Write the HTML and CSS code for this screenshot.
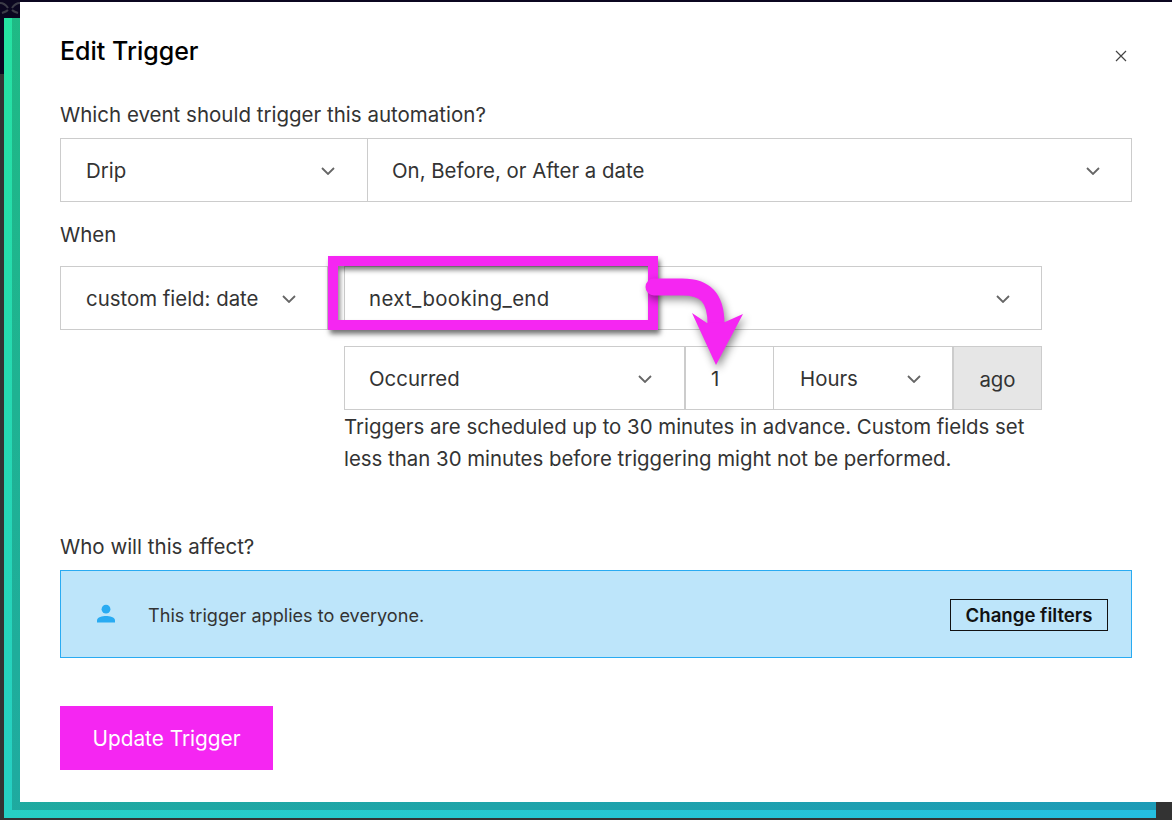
FILE: index.html
```html
<!DOCTYPE html>
<html lang="en">
<head>
<meta charset="utf-8">
<title>Edit Trigger</title>
<link rel="stylesheet" href="styles.css">
</head>
<body>
<div class="desktop">
  <div class="topbar">
    <svg class="swirl" width="20" height="16" viewBox="0 0 20 16"><path d="M0 3c4 0 6 2 8 5M20 3c-4 0-6 2-8 5M2 13c3-1 5-2 6-3M18 13c-3-1-5-2-6-3" fill="none" stroke="#3c3c48" stroke-width="2"/></svg>
  </div>
  <div class="frame"><div class="frame-inner"></div></div>
  <main class="modal">
    <header class="modal-head">
      <h1 class="title">Edit Trigger</h1>
      <svg class="close" width="12" height="12" viewBox="0 0 12 12"><path d="M1 1l10 10M11 1L1 11" fill="none" stroke="#444" stroke-width="1.2"/></svg>
    </header>
    <p class="label label-first">Which event should trigger this automation?</p>
    <div class="row row-event">
      <div class="field sel-drip"><span>Drip</span><svg class="chev" width="14" height="8" viewBox="0 0 14 8"><path d="M1 1l6 6 6-6" fill="none" stroke="#666" stroke-width="1.8"/></svg></div>
      <div class="field sel-date"><span>On, Before, or After a date</span><svg class="chev" width="14" height="8" viewBox="0 0 14 8"><path d="M1 1l6 6 6-6" fill="none" stroke="#666" stroke-width="1.8"/></svg></div>
    </div>
    <p class="label label-when">When</p>
    <div class="row row-when">
      <div class="field sel-kind"><span>custom field: date</span><svg class="chev" width="14" height="8" viewBox="0 0 14 8"><path d="M1 1l6 6 6-6" fill="none" stroke="#666" stroke-width="1.8"/></svg></div>
      <div class="field sel-name"><span class="name-text">next_booking_end</span><svg class="chev" width="14" height="8" viewBox="0 0 14 8"><path d="M1 1l6 6 6-6" fill="none" stroke="#666" stroke-width="1.8"/></svg></div>
    </div>
    <div class="indent">
      <div class="row row-time">
        <div class="field sel-occ"><span>Occurred</span><svg class="chev" width="14" height="8" viewBox="0 0 14 8"><path d="M1 1l6 6 6-6" fill="none" stroke="#666" stroke-width="1.8"/></svg></div>
        <div class="field num"><span>1</span></div>
        <div class="field sel-unit"><span>Hours</span><svg class="chev" width="14" height="8" viewBox="0 0 14 8"><path d="M1 1l6 6 6-6" fill="none" stroke="#666" stroke-width="1.8"/></svg></div>
        <div class="field ago"><span>ago</span></div>
      </div>
      <p class="help">Triggers are scheduled up to 30 minutes in advance. Custom fields set less than 30 minutes before triggering might not be performed.</p>
    </div>
    <p class="label label-who">Who will this affect?</p>
    <div class="notice">
      <svg class="person" width="20" height="20" viewBox="0 0 20 20"><circle cx="10" cy="5.2" r="4.4" fill="#29abf2"/><path d="M1 18.500v-2.200c0-3 5.500-4.300 9-4.300s9 1.300 9 4.300v2.200z" fill="#29abf2"/></svg>
      <span class="notice-text">This trigger applies to everyone.</span>
      <button class="filters" type="button">Change filters</button>
    </div>
    <button class="submit" type="button">Update Trigger</button>
  </main>
  <div class="callout"></div>
  <svg class="arrow" width="120" height="110" viewBox="640 270 120 110">
    <path d="M654 287H682C706 287 716 298 716 324" fill="none" stroke="#f526f2" stroke-width="17" stroke-linecap="round"/>
    <path d="M692 313L707 323L725 322L743 314L716 365Z" fill="#f526f2"/>
  </svg>
</div>
</body>
</html>
```
FILE: styles.css
```css
* { box-sizing: border-box; }
html, body { margin: 0; padding: 0; }
body {
  background: #333;
  font-family: Inter, "Liberation Sans", sans-serif;
  color: #333;
  overflow: hidden;
}
.desktop { position: relative; width: 1172px; height: 820px; overflow: hidden; }
.topbar { height: 74px; background: #0b0620; }
.swirl { display: block; }
.frame {
  position: absolute;
  left: 4px;
  top: 18px;
  width: 1152px;
  height: 800px;
  padding: 0 0 8px 8px;
  background-image: linear-gradient(to right, rgba(38,214,180,0) 0%, #24bee0 100%), linear-gradient(to bottom, #26e3a2 0%, #26d0c4 100%);
}
.frame-inner { height: 100%; background: rgba(0, 0, 0, 0.18); }
.modal {
  position: absolute;
  left: 20px;
  top: 2px;
  width: 1152px;
  height: 800px;
  padding: 0 40px;
  background: #fff;
}
.modal-head { display: flex; justify-content: space-between; align-items: center; height: 97px; }
.title { margin: 0; font-size: 25px; font-weight: 500; line-height: 32px; color: #000; }
.close { margin: 11px 5px 0 0; }
.label { margin: 0; font-size: 20.5px; line-height: 32px; }
.label-first { height: 39px; }
.label-when { margin-top: 17px; height: 47px; }
.label-who { margin-top: 56px; height: 39px; }
.row { display: flex; }
.field {
  display: flex;
  align-items: center;
  justify-content: space-between;
  height: 64px;
  padding: 2px 31px 0 24px;
  border: 1px solid #ccc;
  font-size: 20.4px;
  line-height: 32px;
  background: #fff;
}
.sel-drip { width: 307px; border-right: 0; padding-left: 25px; padding-right: 32px; }
.sel-date { flex: 1; }
.row-when { width: 982px; }
.sel-kind { width: 268px; padding-left: 25px; }
.sel-name { width: 698px; margin-left: 16px; }
.name-text { letter-spacing: 0.35px; }
.indent { width: 698px; margin: 16px 0 0 284px; }
.sel-occ { width: 341px; padding-right: 32px; }
.num { width: 89px; padding-left: 25px; padding-right: 0; }
.sel-unit { width: 179px; border-left: 0; padding-left: 26px; padding-right: 31px; }
.ago { width: 89px; padding: 4px 0 0; justify-content: center; background: #e6e6e6; }
.help { margin: 1px 0 0; font-size: 20.4px; line-height: 32px; }
.notice {
  display: flex;
  align-items: center;
  height: 88px;
  padding: 2px 23px 0 35px;
  border: 1px solid #29abf2;
  background: #bde5fa;
}
.notice-text { flex: 1; margin-left: 32px; font-size: 18.1px; line-height: 28px; }
.filters {
  height: 32px;
  width: 158px;
  padding: 0;
  border: 1.5px solid #111;
  background: transparent;
  font: 600 18.6px/28px Inter, "Liberation Sans", sans-serif;
  color: #111;
}
.person { margin-top: -2px; }
.submit {
  display: block;
  width: 213px;
  height: 64px;
  margin-top: 48px;
  padding: 2px 0 0;
  border: 0;
  background: #f526f2;
  color: #fff;
  font: 400 20.8px/32px Inter, "Liberation Sans", sans-serif;
}
.callout {
  position: absolute;
  left: 328px;
  top: 256px;
  width: 330px;
  height: 74px;
  border: 10px solid #f526f2;
  box-shadow: 2px 4px 5px rgba(0, 0, 0, 0.55), inset 2px 4px 5px rgba(0, 0, 0, 0.5);
}
.arrow {
  position: absolute;
  left: 640px;
  top: 270px;
  filter: drop-shadow(2px 4px 4px rgba(0, 0, 0, 0.45));
}
```
